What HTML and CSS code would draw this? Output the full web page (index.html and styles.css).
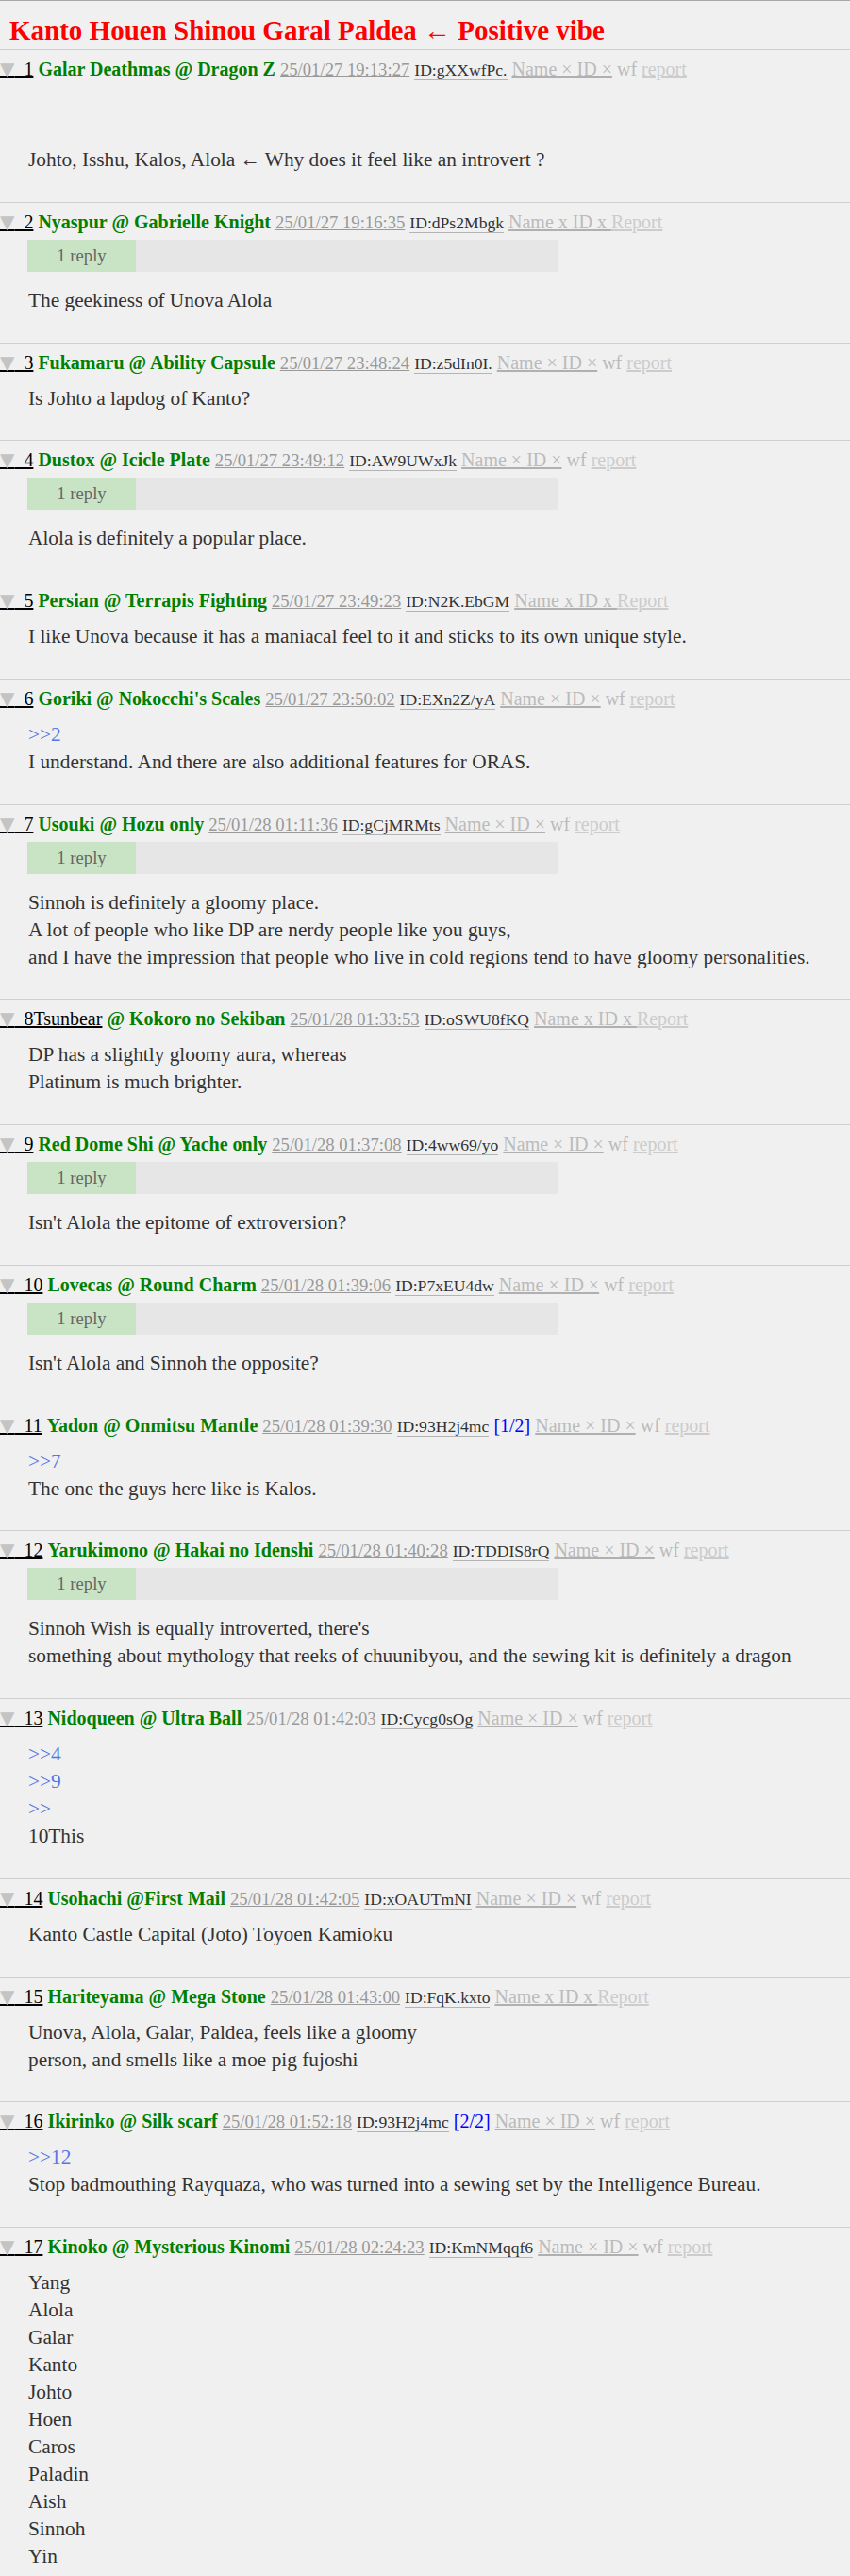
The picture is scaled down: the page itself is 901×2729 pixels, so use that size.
FILE: index.html
```html
<!DOCTYPE html>
<html lang="en">
<head>
<meta charset="utf-8">
<title>Kanto Houen Shinou Garal Paldea ← Positive vibe</title>
<link rel="stylesheet" href="styles.css">
</head>
<body>
<div class="thread">
  <h1 class="thread-title">Kanto Houen Shinou Garal Paldea ← Positive vibe</h1>

  <article class="post">
    <div class="post-head"><a class="num"><span class="tri">▼</span>&nbsp; 1</a> <b class="name">Galar Deathmas @ Dragon Z</b> <span class="date">25/01/27 19:13:27</span> <span class="uid">ID:gXXwfPc.</span> <span class="ng">Name × ID ×</span><span class="wf"> wf</span> <span class="report">report</span></div>
    <div class="post-body"><br><br>Johto, Isshu, Kalos, Alola ← Why does it feel like an introvert ?</div>
  </article>

  <article class="post">
    <div class="post-head"><a class="num"><span class="tri">▼</span>&nbsp; 2</a> <b class="name">Nyaspur @ Gabrielle Knight</b> <span class="date">25/01/27 19:16:35</span> <span class="uid">ID:dPs2Mbgk</span> <span class="ng">Name x ID x </span><span class="report">Report</span></div>
    <div class="replies"><span class="reply-count">1 reply</span></div>
    <div class="post-body">The geekiness of Unova Alola</div>
  </article>

  <article class="post">
    <div class="post-head"><a class="num"><span class="tri">▼</span>&nbsp; 3</a> <b class="name">Fukamaru @ Ability Capsule</b> <span class="date">25/01/27 23:48:24</span> <span class="uid">ID:z5dIn0I.</span> <span class="ng">Name × ID ×</span><span class="wf"> wf</span> <span class="report">report</span></div>
    <div class="post-body">Is Johto a lapdog of Kanto?</div>
  </article>

  <article class="post">
    <div class="post-head"><a class="num"><span class="tri">▼</span>&nbsp; 4</a> <b class="name">Dustox @ Icicle Plate</b> <span class="date">25/01/27 23:49:12</span> <span class="uid">ID:AW9UWxJk</span> <span class="ng">Name × ID ×</span><span class="wf"> wf</span> <span class="report">report</span></div>
    <div class="replies"><span class="reply-count">1 reply</span></div>
    <div class="post-body">Alola is definitely a popular place.</div>
  </article>

  <article class="post">
    <div class="post-head"><a class="num"><span class="tri">▼</span>&nbsp; 5</a> <b class="name">Persian @ Terrapis Fighting</b> <span class="date">25/01/27 23:49:23</span> <span class="uid">ID:N2K.EbGM</span> <span class="ng">Name x ID x </span><span class="report">Report</span></div>
    <div class="post-body">I like Unova because it has a maniacal feel to it and sticks to its own unique style.</div>
  </article>

  <article class="post">
    <div class="post-head"><a class="num"><span class="tri">▼</span>&nbsp; 6</a> <b class="name">Goriki @ Nokocchi's Scales</b> <span class="date">25/01/27 23:50:02</span> <span class="uid">ID:EXn2Z/yA</span> <span class="ng">Name × ID ×</span><span class="wf"> wf</span> <span class="report">report</span></div>
    <div class="post-body"><a class="quote">&gt;&gt;2</a><br>I understand. And there are also additional features for ORAS.</div>
  </article>

  <article class="post">
    <div class="post-head"><a class="num"><span class="tri">▼</span>&nbsp; 7</a> <b class="name">Usouki @ Hozu only</b> <span class="date">25/01/28 01:11:36</span> <span class="uid">ID:gCjMRMts</span> <span class="ng">Name × ID ×</span><span class="wf"> wf</span> <span class="report">report</span></div>
    <div class="replies"><span class="reply-count">1 reply</span></div>
    <div class="post-body">Sinnoh is definitely a gloomy place.<br>A lot of people who like DP are nerdy people like you guys,<br>and I have the impression that people who live in cold regions tend to have gloomy personalities.</div>
  </article>

  <article class="post">
    <div class="post-head"><a class="num"><span class="tri">▼</span>&nbsp; 8Tsunbear</a> <b class="name">@ Kokoro no Sekiban</b> <span class="date">25/01/28 01:33:53</span> <span class="uid">ID:oSWU8fKQ</span> <span class="ng">Name x ID x </span><span class="report">Report</span></div>
    <div class="post-body">DP has a slightly gloomy aura, whereas<br>Platinum is much brighter.</div>
  </article>

  <article class="post">
    <div class="post-head"><a class="num"><span class="tri">▼</span>&nbsp; 9</a> <b class="name">Red Dome Shi @ Yache only</b> <span class="date">25/01/28 01:37:08</span> <span class="uid">ID:4ww69/yo</span> <span class="ng">Name × ID ×</span><span class="wf"> wf</span> <span class="report">report</span></div>
    <div class="replies"><span class="reply-count">1 reply</span></div>
    <div class="post-body">Isn't Alola the epitome of extroversion?</div>
  </article>

  <article class="post">
    <div class="post-head"><a class="num"><span class="tri">▼</span>&nbsp; 10</a> <b class="name">Lovecas @ Round Charm</b> <span class="date">25/01/28 01:39:06</span> <span class="uid">ID:P7xEU4dw</span> <span class="ng">Name × ID ×</span><span class="wf"> wf</span> <span class="report">report</span></div>
    <div class="replies"><span class="reply-count">1 reply</span></div>
    <div class="post-body">Isn't Alola and Sinnoh the opposite?</div>
  </article>

  <article class="post">
    <div class="post-head"><a class="num"><span class="tri">▼</span>&nbsp; 11</a> <b class="name">Yadon @ Onmitsu Mantle</b> <span class="date">25/01/28 01:39:30</span> <span class="uid">ID:93H2j4mc</span> <span class="count">[1/2]</span> <span class="ng">Name × ID ×</span><span class="wf"> wf</span> <span class="report">report</span></div>
    <div class="post-body"><a class="quote">&gt;&gt;7</a><br>The one the guys here like is Kalos.</div>
  </article>

  <article class="post">
    <div class="post-head"><a class="num"><span class="tri">▼</span>&nbsp; 12</a> <b class="name">Yarukimono @ Hakai no Idenshi</b> <span class="date">25/01/28 01:40:28</span> <span class="uid">ID:TDDIS8rQ</span> <span class="ng">Name × ID ×</span><span class="wf"> wf</span> <span class="report">report</span></div>
    <div class="replies"><span class="reply-count">1 reply</span></div>
    <div class="post-body">Sinnoh Wish is equally introverted, there's<br>something about mythology that reeks of chuunibyou, and the sewing kit is definitely a dragon</div>
  </article>

  <article class="post">
    <div class="post-head"><a class="num"><span class="tri">▼</span>&nbsp; 13</a> <b class="name">Nidoqueen @ Ultra Ball</b> <span class="date">25/01/28 01:42:03</span> <span class="uid">ID:Cycg0sOg</span> <span class="ng">Name × ID ×</span><span class="wf"> wf</span> <span class="report">report</span></div>
    <div class="post-body"><a class="quote">&gt;&gt;4</a><br><a class="quote">&gt;&gt;9</a><br><a class="quote">&gt;&gt;</a><br>10This</div>
  </article>

  <article class="post">
    <div class="post-head"><a class="num"><span class="tri">▼</span>&nbsp; 14</a> <b class="name">Usohachi @First Mail</b> <span class="date">25/01/28 01:42:05</span> <span class="uid">ID:xOAUTmNI</span> <span class="ng">Name × ID ×</span><span class="wf"> wf</span> <span class="report">report</span></div>
    <div class="post-body">Kanto Castle Capital (Joto) Toyoen Kamioku</div>
  </article>

  <article class="post">
    <div class="post-head"><a class="num"><span class="tri">▼</span>&nbsp; 15</a> <b class="name">Hariteyama @ Mega Stone</b> <span class="date">25/01/28 01:43:00</span> <span class="uid">ID:FqK.kxto</span> <span class="ng">Name x ID x </span><span class="report">Report</span></div>
    <div class="post-body">Unova, Alola, Galar, Paldea, feels like a gloomy<br>person, and smells like a moe pig fujoshi</div>
  </article>

  <article class="post">
    <div class="post-head"><a class="num"><span class="tri">▼</span>&nbsp; 16</a> <b class="name">Ikirinko @ Silk scarf</b> <span class="date">25/01/28 01:52:18</span> <span class="uid">ID:93H2j4mc</span> <span class="count">[2/2]</span> <span class="ng">Name × ID ×</span><span class="wf"> wf</span> <span class="report">report</span></div>
    <div class="post-body"><a class="quote">&gt;&gt;12</a><br>Stop badmouthing Rayquaza, who was turned into a sewing set by the Intelligence Bureau.</div>
  </article>

  <article class="post">
    <div class="post-head"><a class="num"><span class="tri">▼</span>&nbsp; 17</a> <b class="name">Kinoko @ Mysterious Kinomi</b> <span class="date">25/01/28 02:24:23</span> <span class="uid">ID:KmNMqqf6</span> <span class="ng">Name × ID ×</span><span class="wf"> wf</span> <span class="report">report</span></div>
    <div class="post-body">Yang<br>Alola<br>Galar<br>Kanto<br>Johto<br>Hoen<br>Caros<br>Paladin<br>Aish<br>Sinnoh<br>Yin</div>
  </article>
</div>
</body>
</html>
```

FILE: styles.css
```css
html, body {
  margin: 0;
  padding: 0;
  background: #f0f0f0;
}

body {
  font-family: "Liberation Serif", "Times New Roman", serif;
  font-size: 20px;
  color: #333;
}

.thread {
  border-top: 1px solid #a8a8a8;
}

.thread-title {
  margin: 0;
  padding: 14px 10px 3px;
  font-size: 29px;
  line-height: 34px;
  font-weight: bold;
  color: #ff0000;
  border-bottom: 1px solid #cfcfcf;
}

.post {
  padding: 8px 0 29.75px;
  border-bottom: 1px solid #cfcfcf;
}

.post-head {
  height: 24px;
  line-height: 24px;
  white-space: nowrap;
  overflow: hidden;
}

.num {
  color: #000;
  text-decoration: underline;
}

.tri {
  color: #c4c4c4;
  font-family: "DejaVu Sans", sans-serif;
}

.name {
  color: #008000;
  font-weight: bold;
}

.date {
  color: #999;
  font-size: 18.67px;
  text-decoration: underline;
}

.uid {
  color: #333;
  font-size: 17.6px;
  border-bottom: 1px solid #b4b4b4;
}

.count {
  color: #0000ff;
}

.ng {
  color: #bbb;
  text-decoration: underline;
  text-decoration-color: #b0b0b0;
  text-decoration-thickness: 2px;
}

.wf {
  color: #bbb;
}

.report {
  color: #ccc;
  text-decoration: underline;
}

.replies {
  display: flex;
  width: 563px;
  height: 34px;
  margin: 7px 0 16px 29px;
  background: #e6e6e6;
}

.reply-count {
  display: flex;
  align-items: center;
  justify-content: center;
  width: 115px;
  background: #c8e4c4;
  color: #666;
  font-size: 18.67px;
}

.post-body {
  margin: 12px 0 0 30px;
  font-size: 21.33px;
  line-height: 29px;
}

.quote {
  color: #5577e6;
}
```
